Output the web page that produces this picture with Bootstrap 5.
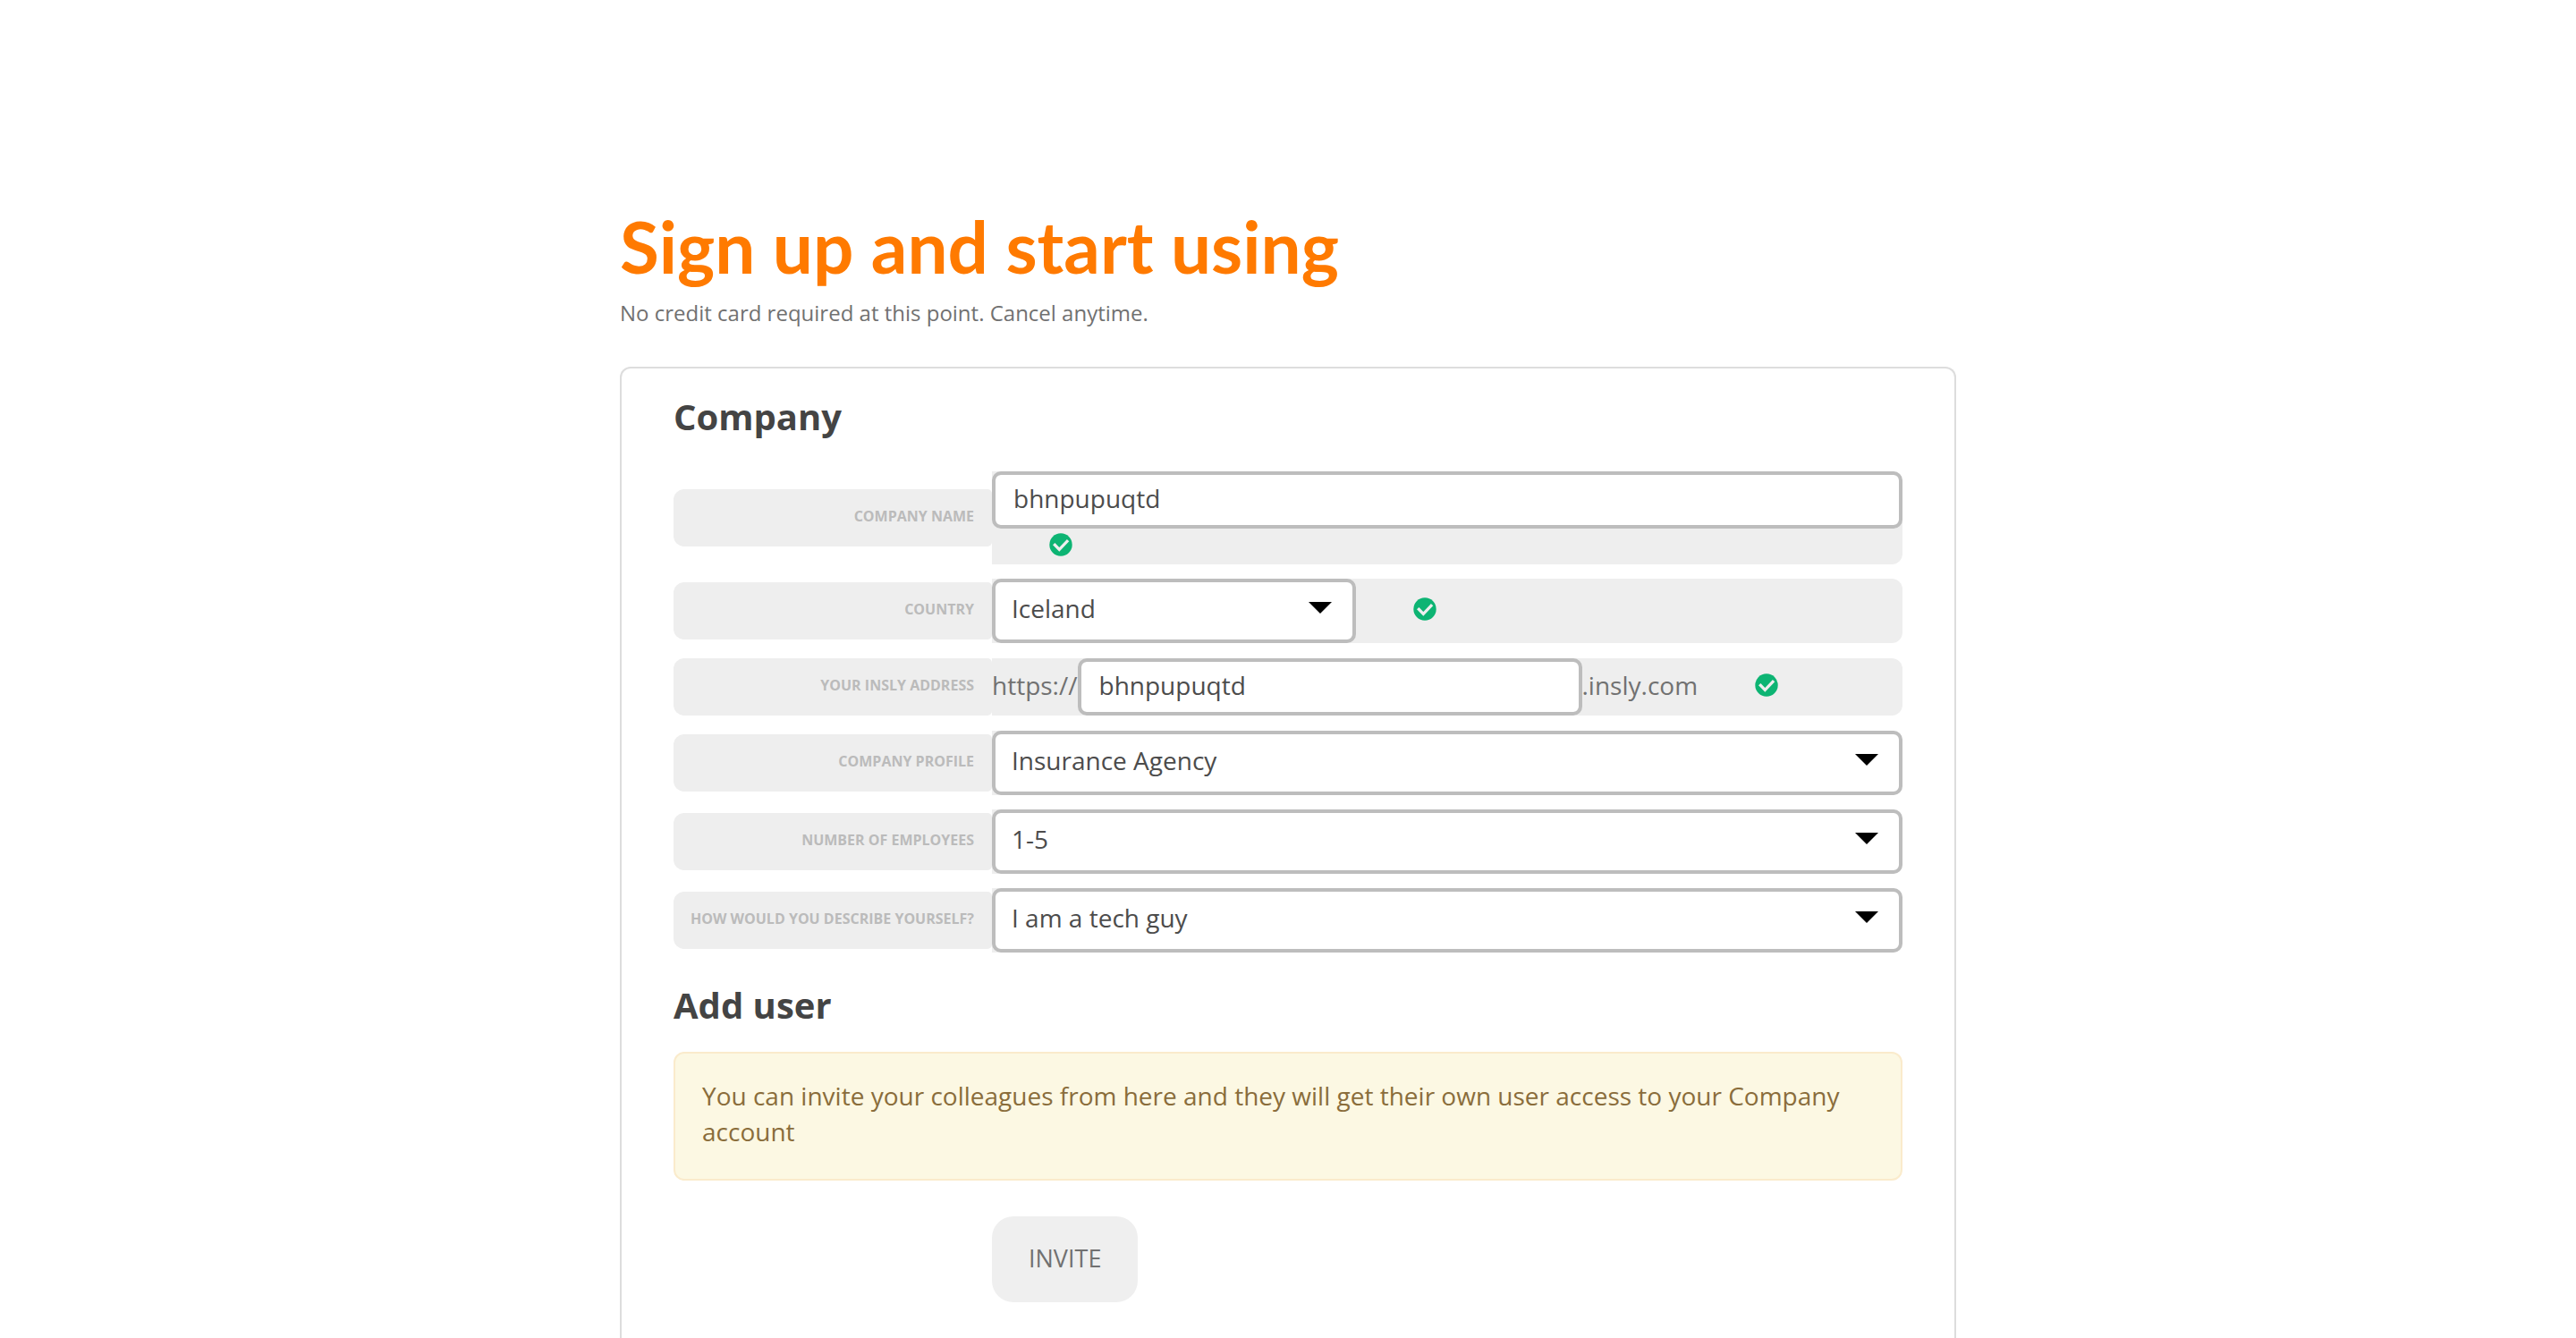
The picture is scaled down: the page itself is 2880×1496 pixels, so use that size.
<!DOCTYPE html>
<html lang="en">
<head>
<meta charset="utf-8">
<meta name="viewport" content="width=device-width, initial-scale=1">
<title>Sign up and start using</title>
<link href="https://cdn.jsdelivr.net/npm/bootstrap@5.3.0/dist/css/bootstrap.min.css" rel="stylesheet">
<style>
  body { font-family: "Open Sans", "Noto Sans", sans-serif; font-size: 28px; line-height: 40px; color: #717171; background: #fff; }
  .signup { max-width: 1494px; padding-top: 227px; }
  .signup-title { font: 700 80px/96px Lato, "Open Sans", sans-serif; color: #ff7a00; margin-bottom: 9px; }
  .signup-note { font-size: 24px; line-height: 36px; margin-bottom: 42px; }
  .signup-panel { border: 2px solid #ddd; border-bottom: 0; border-radius: 12px 12px 0 0; padding: 30px 58px 0; }
  .section-title { font-size: 40px; line-height: 48px; font-weight: 700; color: #444; }
  .signup-fields { gap: 16px; margin: 37px 0 35px; }
  .field-line { min-height: 66px; }
  .field-label { flex: 0 0 356px; height: 64px; padding: 0 20px 4px 0; background: #eee; border-radius: 12px 5px 5px 12px; font-size: 16px; line-height: 60px; font-weight: 700; color: #bbb; text-align: right; text-transform: uppercase; white-space: nowrap; }
  .field-body { background: #eee; border-radius: 0 12px 12px 0; min-width: 0; }
  .field-body .form-control, .field-body .form-select { border: 4px solid #bdbdbd; border-radius: 10px; background-color: #fff; font-size: 28px; line-height: 40px; color: #4c4c4c; }
  .field-body .form-control { height: 64px; padding: 6px 20px 10px; }
  .field-body .form-select { height: 72px; padding: 9px 60px 15px 18px; background-image: url("data:image/svg+xml,%3Csvg xmlns='http://www.w3.org/2000/svg' viewBox='0 0 26 13'%3E%3Cpath d='M0 0h26L13 13z'/%3E%3C/svg%3E"); background-size: 26px 13px; background-position: right 23px top 22px; }
  .field-body .country-select { width: 407px; }
  .field-body .address-input { width: 564px; }
  .affix { padding-bottom: 4px; }
  .ok-line { height: 40px; }
  .ok-icon { width: 26px; height: 26px; margin: 0 0 4px 64px; flex: none; }
  .invite-note { margin: 28px 0 40px; padding: 27px 30px 33px; background: #fcf8e3; border: 2px solid #faebcc; border-radius: 12px; color: #8a6d3b; }
  .invite-line { padding-left: 356px; }
  .invite-btn { height: 96px; padding: 0 41px 2px; border: 0; border-radius: 24px; background: #efefef; color: #717171; font-size: 27px; line-height: 40px; }
</style>
</head>
<body>
<svg class="d-none" xmlns="http://www.w3.org/2000/svg">
  <symbol id="ok" viewBox="0 0 26 26">
    <circle cx="13" cy="13" r="12.7" fill="#0db473"/>
    <path d="M6.3 13.2l5 5.2 8.7-9.2" fill="none" stroke="#eee" stroke-width="3.2" stroke-linecap="square"/>
  </symbol>
</svg>
<main class="signup container-fluid px-0 min-vh-100 d-flex flex-column">
  <h1 class="signup-title">Sign up and start using</h1>
  <p class="signup-note">No credit card required at this point. Cancel anytime.</p>
  <form class="signup-panel flex-grow-1">
    <h2 class="section-title mb-0">Company</h2>
    <div class="signup-fields d-flex flex-column">
      <div class="field-line d-flex align-items-center">
        <label class="field-label" for="company">Company name</label>
        <div class="field-body flex-grow-1">
          <input class="form-control" id="company" type="text" value="bhnpupuqtd">
          <div class="ok-line d-flex align-items-center">
            <svg class="ok-icon" role="img" aria-label="Valid"><use href="#ok"/></svg>
          </div>
        </div>
      </div>
      <div class="field-line d-flex align-items-center">
        <label class="field-label" for="country">Country</label>
        <div class="field-body flex-grow-1 d-flex align-items-center">
          <select class="form-select country-select" id="country"><option>Iceland</option></select>
          <svg class="ok-icon" role="img" aria-label="Valid"><use href="#ok"/></svg>
        </div>
      </div>
      <div class="field-line d-flex align-items-center">
        <label class="field-label" for="address">Your Insly address</label>
        <div class="field-body flex-grow-1 d-flex align-items-center">
          <span class="affix">https://</span>
          <input class="form-control address-input" id="address" type="text" value="bhnpupuqtd">
          <span class="affix">.insly.com</span>
          <svg class="ok-icon" role="img" aria-label="Valid"><use href="#ok"/></svg>
        </div>
      </div>
      <div class="field-line d-flex align-items-center">
        <label class="field-label" for="profile">Company profile</label>
        <div class="field-body flex-grow-1">
          <select class="form-select" id="profile"><option>Insurance Agency</option></select>
        </div>
      </div>
      <div class="field-line d-flex align-items-center">
        <label class="field-label" for="employees">Number of employees</label>
        <div class="field-body flex-grow-1">
          <select class="form-select" id="employees"><option>1-5</option></select>
        </div>
      </div>
      <div class="field-line d-flex align-items-center">
        <label class="field-label" for="describe">How would you describe yourself?</label>
        <div class="field-body flex-grow-1">
          <select class="form-select" id="describe"><option>I am a tech guy</option></select>
        </div>
      </div>
    </div>
    <h2 class="section-title mb-0">Add user</h2>
    <div class="alert invite-note" role="note">You can invite your colleagues from here and they will get their own user access to your Company account</div>
    <div class="invite-line">
      <button class="btn invite-btn" type="button">INVITE</button>
    </div>
  </form>
</main>
<script src="https://cdn.jsdelivr.net/npm/bootstrap@5.3.0/dist/js/bootstrap.bundle.min.js"></script>
</body>
</html>
